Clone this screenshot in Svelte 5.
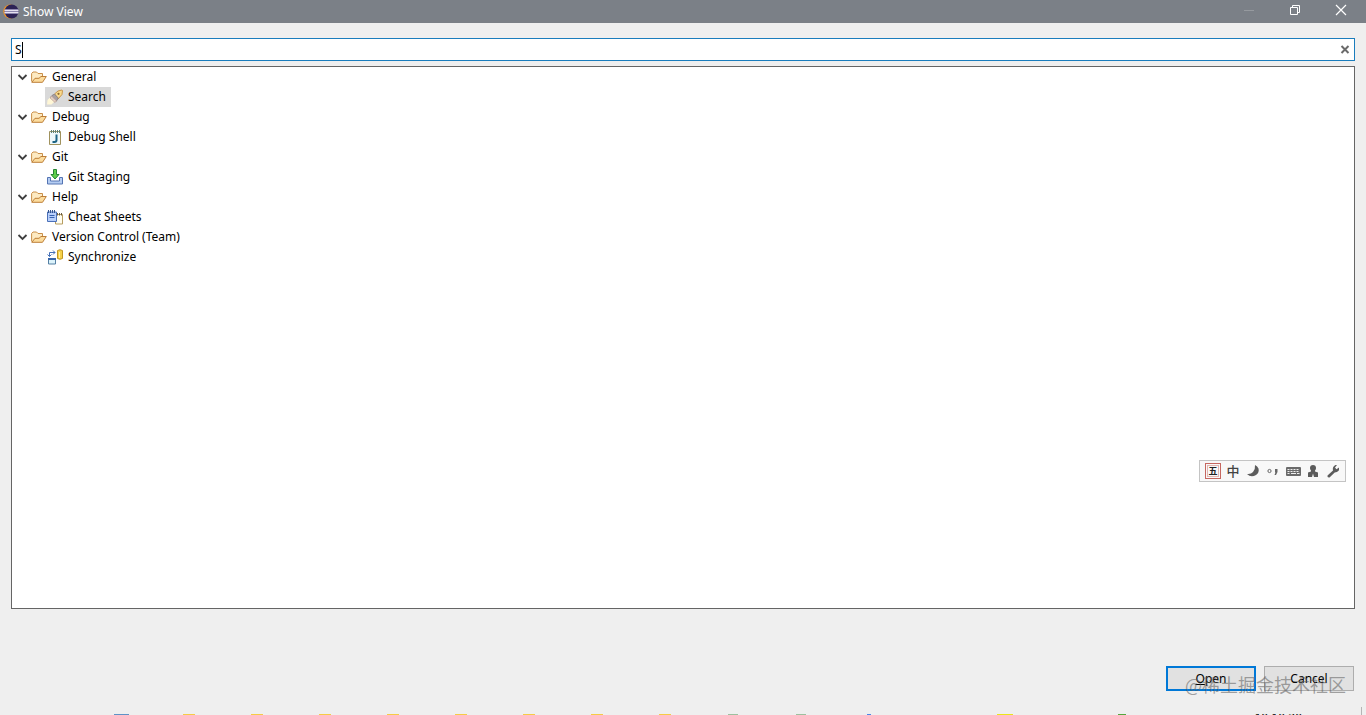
<script>
  let query = $state('S');
  let selected = $state('Search');

  const categories = $state([
    { name: 'General', open: true, views: [{ name: 'Search', icon: 'torch' }] },
    { name: 'Debug', open: true, views: [{ name: 'Debug Shell', icon: 'shell' }] },
    { name: 'Git', open: true, views: [{ name: 'Git Staging', icon: 'staging' }] },
    { name: 'Help', open: true, views: [{ name: 'Cheat Sheets', icon: 'sheets' }] },
    { name: 'Version Control (Team)', open: true, views: [{ name: 'Synchronize', icon: 'sync' }] }
  ]);

  const tasks = [
    'edge', 'folder', 'folder', 'folder', 'folder', 'folder', 'folder',
    'folder', 'folder', 'sheet', 'sheet', 'dot', 'none', 'note'
  ];
</script>

<div class="dialog">
  <header class="titlebar">
    <svg class="logo" width="16" height="16" viewBox="0 0 16 16" aria-hidden="true">
      <circle cx="7.3" cy="7.500" r="7" fill="#f7941e" />
      <circle cx="8.600" cy="7.500" r="6.900" fill="#2c2255" />
      <path d="M1.500 5.500h14M1.500 7.500h14.200M1.500 9.500h14" stroke="#8d86ae" />
      <path d="M1.500 6.500h14M1.500 8.500h14" stroke="#e5e1f0" />
    </svg>
    <h1>Show View</h1>
    <div class="window-buttons">
      <button aria-label="Minimize" disabled>
        <svg width="12" height="12"><path d="M1 6.5h10" stroke="#969a9f" /></svg>
      </button>
      <button aria-label="Restore">
        <svg width="12" height="12" fill="none" stroke="#fff">
          <path d="M1.5 3.5h7v7h-7zM3.5 3.5v-2h7v7h-2" />
        </svg>
      </button>
      <button aria-label="Close">
        <svg width="12" height="12"><path d="M1 1l10 10M11 1L1 11" stroke="#fff" stroke-width="1.2" /></svg>
      </button>
    </div>
  </header>

  <main>
    <div class="filter">
      <input type="text" aria-label="Filter views" bind:value={query} />
      {#if query.length === 1}<span class="caret"></span>{/if}
      <button aria-label="Clear" onclick={() => (query = '')}>
        <svg width="10" height="10"><path d="M1.500 1l7 7M8.500 1l-7 7" stroke="#6a6a6a" stroke-width="2" /></svg>
      </button>
    </div>

    <ul class="tree">
      {#each categories as category}
        <li>
          <button class="row category" aria-expanded={category.open} onclick={() => (category.open = !category.open)}>
            <svg class="twisty" class:closed={!category.open} width="11" height="10" fill="none">
              <path d="M1.5 3l4 4 4-4" stroke="#404040" stroke-width="1.8" />
            </svg>
            <svg class="icon" width="16" height="16" viewBox="0 0 16 16" stroke-linejoin="round">
              <path d="M.6 12.500V4.500L2 3h3.500L7 4.500h4.500V7.500" fill="#fdeac2" stroke="#c98f48" />
              <path d="M.8 13.300L4 9.300h4L10 7.500h5.300l-3.800 5.800z" fill="#fcdc9d" stroke="#bd7f38" />
            </svg>
            <span>{category.name}</span>
          </button>
          {#if category.open}
            <ul>
              {#each category.views as view}
                <li>
                  <button class="row view" class:selected={selected === view.name} onclick={() => (selected = view.name)}>
                    <svg class="icon" width="16" height="16" viewBox="0 0 16 16">
                      {#if view.icon === 'torch'}
                        <path d="M0 15.500L.5 11 3 8.500l4.500 4L4.500 15.500z" fill="#fff7d6" />
                        <path d="M7.500 5L11 2l4-1 .5.500-.5 4-4 4.500z" fill="#f9d98c" stroke="#c8964a" />
                        <path d="M5 6.500L7.500 5l3.700 4-1.200 2.500-2 1.500-4.500-4.500z" fill="#a8a0a3" stroke="#857b80" stroke-width=".8" />
                        <path d="M4.500 7l5 5-1.500 1.500-5-4.500z" fill="#e6cfc3" stroke="#b79a8c" stroke-width=".6" />
                        <circle cx="11.500" cy="4.800" r="1.100" fill="#8c672f" />
                      {:else if view.icon === 'shell'}
                        <path d="M2.500 2.500h11v13h-11z" fill="#eef8fb" stroke="#a0925d" />
                        <path d="M4.500 1v3M6.500 1v3M8.500 1v3M10.500 1v3M12.500 1v3" stroke="#5e8178" />
                        <path d="M9.500 5.500V11q0 2-2 2H5.500" fill="none" stroke="#1c6485" stroke-width="2" />
                      {:else if view.icon === 'staging'}
                        <path d="M3.500 8.500h-3v6.500h15V8.500h-3v3.500h-9z" fill="#b5cdf2" stroke="#5474b3" />
                        <path d="M6.500 .5h3v5H12L8 10 4 5.500h2.500z" fill="#5fce4c" stroke="#258533" />
                      {:else if view.icon === 'sheets'}
                        <path d="M8.500 5.500h7v9.500h-7z" fill="#fffdf0" stroke="#b79d60" />
                        <path d="M10.500 4v2.500M12.500 4v2.500M14.500 4v2.500" stroke="#665b44" />
                        <path d="M.5 3h9v9.500h-9z" fill="#b8cffa" stroke="#4a70b8" />
                        <path d="M1.500 1v3M3.500 1v3M5.500 1v3M7.500 1v3" stroke="#34548e" />
                        <path d="M2.500 6.500h5M2.500 8.500h5" stroke="#3762b0" />
                      {:else}
                        <path d="M1.500 9.500h7v5.500h-7z" fill="#dcf3fb" stroke="#5580a4" />
                        <path d="M1 10h8" stroke="#3765aa" stroke-width="2" />
                        <path d="M2.500 7.500v-4H8M6 1.500l2 2-2 2M.5 5.500l2 2 2-2" fill="none" stroke="#4570b8" />
                        <path d="M10.500 1.500v8q2.500 1.500 5 0v-8q-2.500-1.500-5 0z" fill="#f5d049" stroke="#c29722" />
                        <path d="M12.500 3v6" stroke="#fff0a4" />
                      {/if}
                    </svg>
                    <span>{view.name}</span>
                  </button>
                </li>
              {/each}
            </ul>
          {/if}
        </li>
      {/each}
    </ul>

    <div class="actions">
      <button class="default"><u>O</u>pen</button>
      <button>Cancel</button>
      <span class="watermark">@稀土掘金技术社区</span>
    </div>
  </main>

  <footer class="taskbar">
    <div class="tasks">
      {#each tasks as task}
        <span class="task"><i class={task}></i></span>
      {/each}
      <i class="status"></i>
    </div>
    <time>10:10:20</time>
  </footer>
  <span class="desktop-edge"></span>

  <div class="ime" role="toolbar" aria-label="Input method">
    <button class="wubi"><span>五</span></button>
    <button>中</button>
    <button aria-label="Half width">
      <svg width="14" height="14"><path d="M9 1q2.500 1 3.500 3.500 1 4-2.500 6.500-5 3-9-1 4 .5 6-2 2.500-3 2-7z" fill="#5c5c5c" /></svg>
    </button>
    <button aria-label="Punctuation">
      <svg width="14" height="14">
        <circle cx="3.500" cy="7" r="1.600" fill="none" stroke="#666" />
        <path d="M9 5h2.500v3L10 11H8.500l1-2.500H9z" fill="#666" />
      </svg>
    </button>
    <button aria-label="Soft keyboard">
      <svg width="16" height="14">
        <rect x="1" y="3" width="15" height="9" rx="1" fill="#6a6a6a" />
        <path d="M2.500 5.500h12M2.500 7.500h12" stroke="#eee" stroke-dasharray="2 1" />
        <path d="M2.500 9.500h2M6 9.500h5M12 9.500h2.500" stroke="#eee" />
      </svg>
    </button>
    <button aria-label="Account">
      <svg width="14" height="14">
        <circle cx="7" cy="4" r="3" fill="#5c5c5c" />
        <path d="M5 6h4v1.500l3 1V13H8L7 9.500 6 13H2V8.500l3-1z" fill="#5c5c5c" />
      </svg>
    </button>
    <button aria-label="Settings">
      <svg width="14" height="14"><path d="M1.500 11.500l5.500-5q-1-4 2.500-5.500l1.500 0-2 2.500 1.500 1.700L13 3.500q.800 4.500-4.300 5L3.500 13.500q-2.500.500-2-2z" fill="#5c5c5c" /></svg>
    </button>
  </div>
</div>

<style>
  :global(body) {
    margin: 0;
  }

  .dialog {
    position: relative;
    display: flex;
    flex-direction: column;
    min-height: 100vh;
    overflow: hidden;
    background: #efefef;
    color: #000;
    font: 12px/20px 'Noto Sans', 'Noto Sans CJK SC', sans-serif;
  }

  button {
    padding: 0;
    border: 0;
    background: none;
    color: inherit;
    font: inherit;
  }

  svg {
    display: block;
    flex: none;
  }

  ul {
    margin: 0;
    padding: 0;
    list-style: none;
  }

  .titlebar {
    display: flex;
    align-items: center;
    height: 23px;
    padding-left: 3px;
    background: #7b8087;
    color: #fff;
  }

  h1 {
    flex: 1;
    margin: 0 0 0 4px;
    font-size: 12px;
    font-weight: 400;
  }

  .window-buttons {
    display: flex;
    align-self: flex-start;
    padding-right: 2px;
  }

  .window-buttons button {
    display: grid;
    place-items: center;
    width: 46px;
    height: 20px;
  }

  main {
    display: flex;
    flex: 1;
    flex-direction: column;
    padding: 15px 11px 23px;
  }

  .filter {
    position: relative;
    display: flex;
    align-items: center;
    height: 21px;
    border: 1px solid #1a7dbd;
    background: #fff;
  }

  .filter input {
    flex: 1;
    min-width: 0;
    height: 21px;
    box-sizing: border-box;
    padding: 0 3px;
    border: 0;
    outline: 0;
    background: none;
    caret-color: transparent;
    font: inherit;
  }

  .filter button {
    padding: 0 4px;
  }

  .caret {
    position: absolute;
    top: 3px;
    left: 10px;
    width: 1px;
    height: 16px;
    background: #000;
  }

  .tree {
    flex: 1;
    margin-top: 5px;
    border: 1px solid #656565;
    background: #fff;
  }

  .row {
    display: flex;
    align-items: center;
    height: 20px;
    white-space: nowrap;
  }

  .category {
    padding-left: 5px;
  }

  .category .icon {
    margin: 0 5px 0 3px;
  }

  .twisty.closed {
    transform: rotate(-90deg);
  }

  .view {
    gap: 5px;
    margin-left: 33px;
    padding: 0 5px 0 2px;
  }

  .selected {
    background: #d9d9d9;
  }

  .actions {
    position: relative;
    display: flex;
    justify-content: flex-end;
    gap: 8px;
    margin-top: 57px;
    padding-right: 1px;
  }

  .actions button {
    width: 90px;
    height: 25px;
    border: 1px solid #adadad;
    background: #e1e1e1;
  }

  .actions .default {
    border: 2px solid #0078d7;
  }

  .watermark {
    position: absolute;
    right: 9px;
    bottom: -5px;
    color: rgba(90, 90, 90, 0.55);
    font: 18px/24px 'Noto Sans CJK SC', sans-serif;
    pointer-events: none;
  }

  /* only the top edge of the taskbar shows under the dialog */
  .taskbar {
    display: flex;
    justify-content: space-between;
    height: 1px;
    padding: 0 64px 0 87px;
    overflow: hidden;
  }

  .tasks {
    display: flex;
  }

  .task {
    display: flex;
    justify-content: center;
    width: 68px;
  }

  .task i {
    width: 12px;
    height: 1px;
  }

  .task .edge {
    width: 15px;
    background: #5f93c7;
  }

  .task .folder {
    background: #f7cb45;
  }

  .task .sheet {
    width: 10px;
    background: #9dc09f;
  }

  .task .dot {
    width: 4px;
    background: #4c86e8;
  }

  .task .note {
    width: 16px;
    background: #ece518;
  }

  .status {
    width: 8px;
    height: 1px;
    margin-left: 79px;
    background: #54a63d;
  }

  time {
    margin-top: -4px;
    line-height: 16px;
  }

  .desktop-edge {
    position: absolute;
    right: 4px;
    bottom: 0;
    width: 1px;
    height: 8px;
    background: #b5b5b5;
  }

  .ime {
    position: absolute;
    right: 20px;
    bottom: 233px;
    display: flex;
    padding: 0 2px 0 3px;
    border: 1px solid #c4c4c4;
    background: #f8f8f8;
    color: #444;
    font: 500 13px/20px 'Noto Sans CJK SC', sans-serif;
  }

  .ime button {
    display: grid;
    place-items: center;
    width: 20px;
    height: 20px;
  }

  .wubi span {
    width: 10px;
    height: 10px;
    border: 1px solid #e3b5b0;
    outline: 1px solid #c66760;
    outline-offset: 1px;
    color: #222;
    font-size: 9px;
    font-weight: 700;
    line-height: 10px;
  }
</style>
